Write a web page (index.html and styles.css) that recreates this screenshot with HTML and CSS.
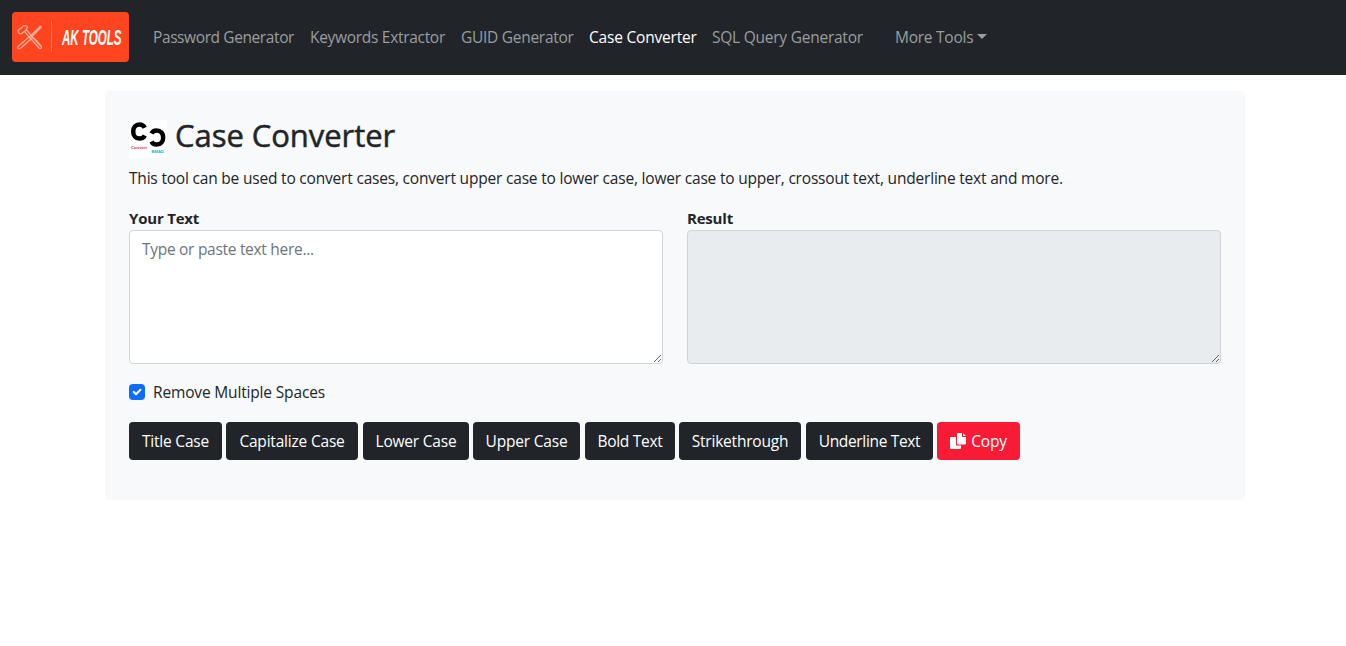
FILE: index.html
```html
<!DOCTYPE html>
<html lang="en">
<head>
<meta charset="utf-8">
<title>Case Converter</title>
<link rel="stylesheet" href="styles.css">
</head>
<body>
<nav class="navbar">
  <a class="brand">
    <svg width="117" height="50" viewBox="0 0 117 50">
      <rect width="117" height="50" rx="4" fill="#ff4420"/>
      <g fill="none" stroke="#ffb09c" stroke-width="1.200" stroke-linecap="round" stroke-linejoin="round">
        <path d="M6 18.500 12 13.500q3 0 3.500 2l-1.500 2.500-5 4q-2.500 0-3-3.500z"/>
        <path d="M12.500 19.500 27 36q2 1.500 2.500-.5 0-1-1.500-2L14.500 18"/>
        <path d="M28.500 14 18 24.500M29.500 15 19.500 25M17 25 6 34.500q-.8 2.500 2 2.200L19 27z"/>
        <path d="m20 26 3 1 6 7"/>
      </g>
      <path d="M39.500 9v31" stroke="#ff7255"/>
      <text class="brand-text" transform="translate(50 33) scale(.515 1)">AK TOOLS</text>
    </svg>
  </a>
  <a class="nav-link n1">Password Generator</a>
  <a class="nav-link n2">Keywords Extractor</a>
  <a class="nav-link n3">GUID Generator</a>
  <a class="nav-link n4 active">Case Converter</a>
  <a class="nav-link n5">SQL Query Generator</a>
  <a class="nav-link n6">More Tools<span class="caret"></span></a>
</nav>
<main class="panel">
  <h2 class="title">
    <svg width="38" height="38" viewBox="0 0 38 38">
      <rect width="38" height="38" fill="#fff"/>
      <path d="M15.800 7.800C14.500 5.200 12.500 4.500 10.500 4.500C6.500 4.500 4.200 7.500 4.200 11.500S6.500 18.600 10.500 18.600C13 18.600 14.800 17.500 15.800 15.500" fill="none" stroke="#000" stroke-width="4.500"/>
      <path d="M22.500 13.500C23.500 11.300 25.300 10.500 27.500 10.500C32 10.500 34.200 13.500 34.200 17.500S32 24.600 27.500 24.600C25.200 24.600 23.500 23.500 22.500 21.500" fill="none" stroke="#000" stroke-width="4.500"/>
      <text class="tiny red" x="2" y="28.500">Convert</text>
      <text class="tiny blue" x="22.500" y="32.500">BMAD</text>
    </svg>
    <span class="title-text">Case Converter</span>
  </h2>
  <p class="lead">This tool can be used to convert cases, convert upper case to lower case, lower case to upper, crossout text, underline text and more.</p>
  <div class="columns">
    <div class="column"><label class="label">Your Text</label><textarea class="field" placeholder="Type or paste text here..."></textarea></div>
    <div class="column"><label class="label">Result</label><textarea class="field result" readonly></textarea></div>
  </div>
  <label class="check">
    <svg width="16" height="16" viewBox="0 0 16 16"><rect width="16" height="16" rx="4" fill="#0d6efd"/><path d="m4.800 8 2.200 2.200 4.400-4.400" fill="none" stroke="#fff" stroke-width="2" stroke-linecap="round" stroke-linejoin="round"/></svg>
    <span class="check-text">Remove Multiple Spaces</span>
  </label>
  <div class="buttons">
    <button class="btn b1">Title Case</button>
    <button class="btn b2">Capitalize Case</button>
    <button class="btn b3">Lower Case</button>
    <button class="btn b4">Upper Case</button>
    <button class="btn b5">Bold Text</button>
    <button class="btn b6">Strikethrough</button>
    <button class="btn b7">Underline Text</button>
    <button class="btn b8 copy"><svg width="16" height="16" viewBox="0 0 16 16" fill="#fff"><path d="M1 4h5v8.500h5V15q0 1-1 1H1q-1 0-1-1V5q0-1 1-1z"/><path d="M8 0h4v4h4v6.500q0 1-1 1H8q-1 0-1-1V1q0-1 1-1zM13 0l3 3h-3z"/></svg><span>Copy</span></button>
  </div>
</main>
</body>
</html>
```
FILE: styles.css
```css
* { box-sizing: border-box; }
body { margin: 0; background: #fff; color: #212529; font: 16px/24px "Open Sans", "Noto Sans", sans-serif; }
.navbar { display: flex; align-items: center; height: 75px; padding: 0 0 1px 12px; background: #212529; }
.brand { display: block; height: 50px; margin-right: 24px; }
.brand svg { display: block; }
.brand-text { font: italic 700 22.500px "Liberation Sans", sans-serif; fill: #fff; }
.nav-link { flex: none; white-space: nowrap; color: #9b9d9e; font-size: 15.500px; }
.nav-link.active { color: #fff; }
.n1 { width: 157px; letter-spacing: -0.400px; }
.n2 { width: 151px; letter-spacing: -0.300px; }
.n3 { width: 128px; letter-spacing: -0.280px; }
.n4 { width: 123px; letter-spacing: -0.200px; }
.n5 { width: 183px; letter-spacing: -0.240px; }
.n6 { letter-spacing: -0.250px; display: flex; align-items: center; }
.caret { margin: -2px 0 0 4px; border: 5px solid transparent; border-top-color: currentColor; border-bottom: 0; }
.panel { width: 1140px; height: 409px; margin: 16px 0 0 105px; padding: 24px; background: #f8f9fa; border-radius: 4px; }
.title { display: flex; align-items: flex-start; height: 43px; margin: 0 0 8px; font-size: 31px; line-height: 38px; font-weight: 500; }
.title svg { flex: none; margin: 5px 8px 0 0; }
.title-text { padding-top: 1px; letter-spacing: -0.050px; -webkit-text-stroke: 0.500px #212529; }
.tiny { font: 700 4.200px "Liberation Sans", sans-serif; }
.red { fill: #ec2b3d; }
.blue { fill: #14b2d8; }
.lead { margin: 0 0 16px; white-space: nowrap; font-size: 15.500px; letter-spacing: -0.195px; }
.columns { display: grid; grid-template-columns: 534px 534px; gap: 24px; }
.label { display: block; font-weight: 700; font-size: 15px; letter-spacing: -0.200px; }
.field { display: block; width: 100%; height: 134px; padding: 6px 12px; border: 1px solid #ced4da; border-radius: 4px; background: #fff; color: #212529; font: 15.500px/24px "Open Sans", sans-serif; letter-spacing: -0.290px; resize: vertical; outline: 0; }
.field::placeholder { color: #6c757d; opacity: 1; }
.result { background: #e9ecef; }
.check { display: flex; align-items: center; gap: 8px; height: 24px; margin-top: 16px; font-size: 15.500px; letter-spacing: -0.160px; }
.buttons { display: flex; gap: 4px; margin-top: 18px; }
.btn { display: flex; align-items: center; justify-content: center; flex: none; height: 38px; padding: 0; border: 0; border-radius: 4px; background: #212529; color: #fff; font: 15.500px/24px "Open Sans", sans-serif; letter-spacing: -0.200px; white-space: nowrap; }
.b1 { width: 93px; }
.b2 { width: 132px; margin-right: 1px; }
.b3 { width: 106px; }
.b4 { width: 107px; margin-right: 1px; }
.b5 { width: 90px; letter-spacing: -0.300px; }
.b6 { width: 122px; margin-right: 1px; }
.b7 { width: 127px; letter-spacing: -0.330px; }
.b8 { width: 83px; gap: 5px; }
.copy { background: #f91a36; }
```
